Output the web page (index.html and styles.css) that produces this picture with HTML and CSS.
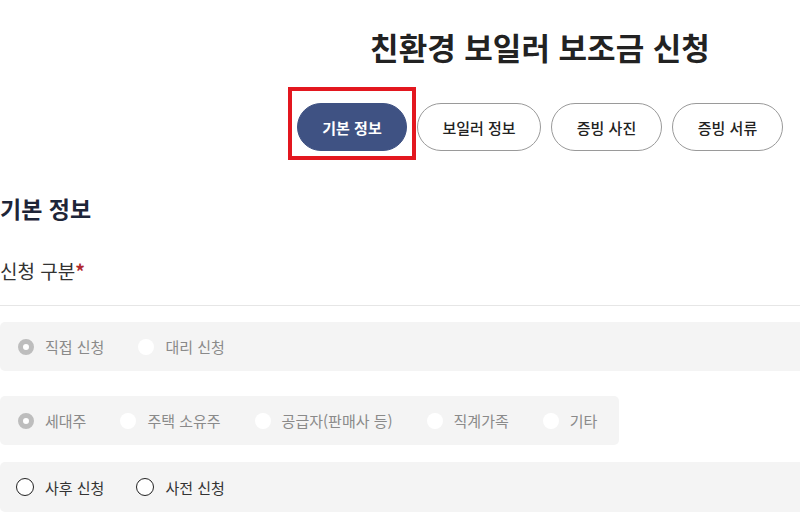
FILE: index.html
```html
<!DOCTYPE html>
<html lang="ko">
<head>
<meta charset="utf-8">
<link rel="stylesheet" href="styles.css">
</head>
<body>
<div class="page">
  <h1 class="title">친환경 보일러 보조금 신청</h1>
  <nav class="tabs">
    <span class="tab-wrap">
      <button class="tab active">기본 정보</button>
      <span class="highlight"></span>
    </span>
    <button class="tab tab-wide">보일러 정보</button>
    <button class="tab">증빙 사진</button>
    <button class="tab">증빙 서류</button>
  </nav>

  <h2 class="section-title">기본 정보</h2>
  <div class="field-label">신청 구분<span class="req">*</span></div>
  <hr class="divider">

  <div class="radio-box disabled full">
    <label class="radio"><span class="dot checked"></span>직접 신청</label>
    <label class="radio"><span class="dot"></span>대리 신청</label>
  </div>

  <div class="radio-box disabled fit">
    <label class="radio"><span class="dot checked"></span>세대주</label>
    <label class="radio"><span class="dot"></span>주택 소유주</label>
    <label class="radio"><span class="dot"></span>공급자(판매사 등)</label>
    <label class="radio"><span class="dot"></span>직계가족</label>
    <label class="radio"><span class="dot"></span>기타</label>
  </div>

  <div class="radio-box active-box full">
    <label class="radio"><span class="dot"></span>사후 신청</label>
    <label class="radio"><span class="dot"></span>사전 신청</label>
  </div>
</div>
</body>
</html>
```

FILE: styles.css
```css
html, body {
  margin: 0;
  padding: 0;
  overflow: hidden;
  background: #fff;
}
body {
  font-family: "Noto Sans CJK KR", "Noto Sans", sans-serif;
  color: #333;
}
.page {
  width: 1080px;
  display: flex;
  flex-direction: column;
  align-items: flex-start;
}
.title {
  align-self: stretch;
  text-align: center;
  margin: 0;
  padding-top: 27px;
  font-size: 31px;
  line-height: 40px;
  font-weight: 700;
  color: #222;
}
.tabs {
  align-self: stretch;
  display: flex;
  justify-content: center;
  gap: 10px;
  margin-top: 36px;
}
.tab-wrap {
  position: relative;
  display: flex;
}
.tab {
  width: 111px;
  height: 48px;
  border-radius: 24px;
  border: 1px solid #9a9a9a;
  background: #fff;
  font-family: inherit;
  font-size: 15px;
  font-weight: 500;
  color: #222;
  padding: 0;
}
.tab-wide {
  width: 124px;
}
.tab.active {
  width: 110px;
  background: #3f5283;
  border-color: #3f5283;
  color: #fff;
  font-weight: 700;
}
.highlight {
  position: absolute;
  left: -9px;
  top: -16px;
  right: -9px;
  bottom: -9px;
  border: 4px solid #e3171f;
  pointer-events: none;
}
.section-title {
  margin: 0;
  margin-top: 42px;
  font-size: 23px;
  line-height: 30px;
  font-weight: 700;
  color: #1e2538;
}
.field-label {
  margin-top: 35px;
  font-size: 19px;
  line-height: 26px;
  color: #333;
}
.req {
  color: #b0282e;
  font-weight: 700;
}
.divider {
  align-self: stretch;
  margin: 0;
  margin-top: 21px;
  border: 0;
  border-top: 1px solid #e6e6e6;
}
.radio-box {
  display: flex;
  align-items: center;
  height: 49px;
  padding: 0 18px;
  background: #f4f4f4;
  border-radius: 5px;
  box-sizing: border-box;
}
.radio-box.full {
  align-self: stretch;
}
.radio-box.fit {
  width: 619px;
}
.radio-box + .radio-box {
  margin-top: 25px;
}
.radio-box.active-box {
  margin-top: 17px;
  padding-left: 16px;
  height: 50px;
}
.divider + .radio-box {
  margin-top: 16px;
}
.radio {
  display: flex;
  align-items: center;
  font-size: 15px;
  color: #8a8a8a;
  margin-right: 34px;
  white-space: nowrap;
}
.dot {
  width: 16px;
  height: 16px;
  border-radius: 50%;
  background: #fff;
  margin-right: 11px;
  box-sizing: border-box;
}
.dot.checked {
  background: #fff;
  border: 5px solid #bdbdbd;
}
.active-box .radio {
  color: #333;
  margin-right: 32px;
}
.active-box .dot {
  width: 18px;
  height: 18px;
  border: 1.5px solid #222;
  margin-right: 11px;
}
```
